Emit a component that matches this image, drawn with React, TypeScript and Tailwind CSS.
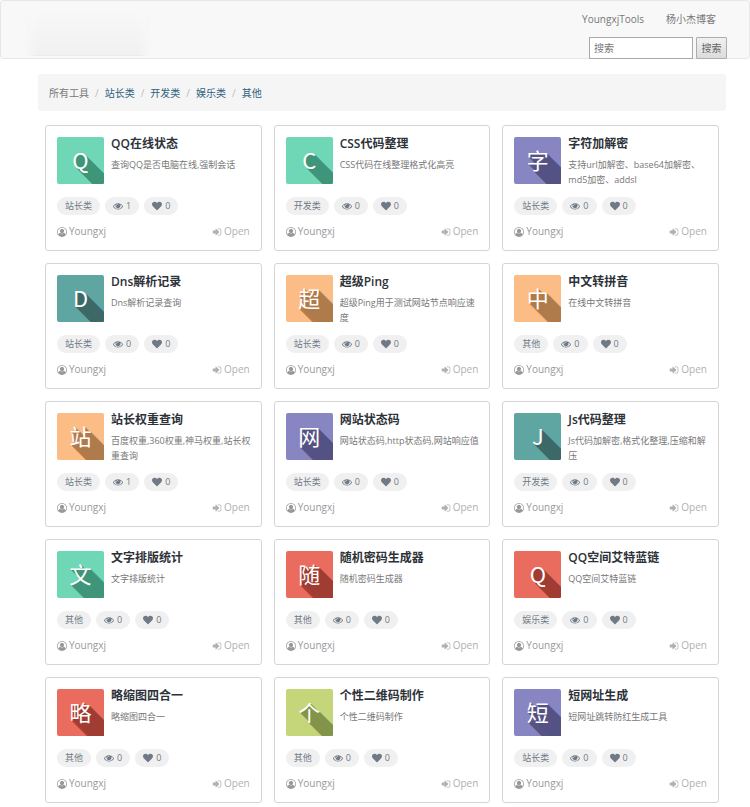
import React from "react";

type Tone = { tile: string; shade: string };

const tones: Record<string, Tone> = {
  mint: { tile: "bg-[#6fd7b6]", shade: "#3f9579" },
  violet: { tile: "bg-[#8886c2]", shade: "#545284" },
  teal: { tile: "bg-[#5fa5a2]", shade: "#3c6967" },
  peach: { tile: "bg-[#fbbc85]", shade: "#b07b4a" },
  coral: { tile: "bg-[#ea6c5e]", shade: "#a03c32" },
  lime: { tile: "bg-[#c4d57a]", shade: "#82934a" },
};

type Tool = {
  glyph: string;
  tone: string;
  title: string;
  desc: string;
  category: string;
  views: number;
};

const tools: Tool[] = [
  { glyph: "Q", tone: "mint", title: "QQ在线状态", desc: "查询QQ是否电脑在线,强制会话", category: "站长类", views: 1 },
  { glyph: "C", tone: "mint", title: "CSS代码整理", desc: "CSS代码在线整理格式化高亮", category: "开发类", views: 0 },
  { glyph: "字", tone: "violet", title: "字符加解密", desc: "支持url加解密、base64加解密、md5加密、addsl", category: "站长类", views: 0 },
  { glyph: "D", tone: "teal", title: "Dns解析记录", desc: "Dns解析记录查询", category: "站长类", views: 0 },
  { glyph: "超", tone: "peach", title: "超级Ping", desc: "超级Ping用于测试网站节点响应速度", category: "站长类", views: 0 },
  { glyph: "中", tone: "peach", title: "中文转拼音", desc: "在线中文转拼音", category: "其他", views: 0 },
  { glyph: "站", tone: "peach", title: "站长权重查询", desc: "百度权重,360权重,神马权重,站长权重查询", category: "站长类", views: 1 },
  { glyph: "网", tone: "violet", title: "网站状态码", desc: "网站状态码,http状态码,网站响应值", category: "站长类", views: 0 },
  { glyph: "J", tone: "teal", title: "Js代码整理", desc: "Js代码加解密,格式化整理,压缩和解压", category: "开发类", views: 0 },
  { glyph: "文", tone: "mint", title: "文字排版统计", desc: "文字排版统计", category: "其他", views: 0 },
  { glyph: "随", tone: "coral", title: "随机密码生成器", desc: "随机密码生成器", category: "其他", views: 0 },
  { glyph: "Q", tone: "coral", title: "QQ空间艾特蓝链", desc: "QQ空间艾特蓝链", category: "娱乐类", views: 0 },
  { glyph: "略", tone: "coral", title: "略缩图四合一", desc: "略缩图四合一", category: "其他", views: 0 },
  { glyph: "个", tone: "lime", title: "个性二维码制作", desc: "个性二维码制作", category: "其他", views: 0 },
  { glyph: "短", tone: "violet", title: "短网址生成", desc: "短网址跳转防红生成工具", category: "站长类", views: 0 },
];

const paths = {
  eye: "M1664 960q-152-236-381-353 61 104 61 225 0 185-131.5 316.5t-316.5 131.5-316.5-131.5-131.5-316.5q0-121 61-225-229 117-381 353 133 205 333.5 326.5t434.5 121.5 434.5-121.5 333.5-326.5zm-720-384q0-20-14-34t-34-14q-125 0-214.5 89.5t-89.5 214.5q0 20 14 34t34 14 34-14 14-34q0-86 61-147t147-61q20 0 34-14t14-34zm848 384q0 34-20 69-140 230-376.5 368.5t-499.5 138.5-499.5-139-376.5-368q-20-35-20-69t20-69q140-229 376.5-368t499.5-139 499.5 139 376.5 368q20 35 20 69z",
  heart: "M896 1664q-26 0-44-18l-624-602q-10-8-27.5-26t-55.5-65.5-68-97.5-53.5-121-23.5-138q0-220 127-344t351-124q62 0 126.5 21.5t120 58 95.5 68.5 76 68q36-36 76-68t95.5-68.5 120-58 126.5-21.5q224 0 351 124t127 344q0 221-229 450l-623 600q-18 18-44 18z",
  user: "M896 0q182 0 348 71t286 191 191 286 71 348q0 181-70.5 347t-190.5 286-286 191.5-349 71.5-349-71-285.5-191.5-190.5-286-71-347.5 71-348 191-286 286-191 348-71zm619 1351q149-205 149-455 0-156-61-298t-164-245-245-164-298-61-298 61-245 164-164 245-61 298q0 250 149 455 66-327 306-327 131 128 313 128t313-128q240 0 306 327zm-235-647q0-159-112.5-271.5t-271.5-112.5-271.5 112.5-112.5 271.5 112.5 271.5 271.5 112.5 271.5-112.5 112.5-271.5z",
  enter: "M1312 896q0 26-19 45l-544 544q-19 19-45 19t-45-19-19-45v-288h-448q-26 0-45-19t-19-45v-384q0-26 19-45t45-19h448v-288q0-26 19-45t45-19 45 19l544 544q19 19 19 45zm352-352v704q0 119-84.5 203.5t-203.5 84.5h-320q-13 0-22.5-9.5t-9.5-22.5q0-4-1-20t-.5-26.5 3-23.5 10-19.5 20.5-6.5h320q66 0 113-47t47-113v-704q0-66-47-113t-113-47h-312l-11.5-1-11.5-3-8-5.5-7-9-2-13.5q0-4-1-20t-.5-26.5 3-23.5 10-19.5 20.5-6.5h320q119 0 203.5 84.5t84.5 203.5z",
};

function Icon({ name, className }: { name: keyof typeof paths; className: string }) {
  return (
    <svg viewBox="0 0 1792 1792" fill="currentColor" aria-hidden="true" className={className}>
      <path d={paths[name]} />
    </svg>
  );
}

// Stacks one-pixel diagonal steps into a long flat shadow that the tile clips.
function longShadow(color: string) {
  return Array.from({ length: 40 }, (_, i) => `${i + 1}px ${i + 1}px 0 ${color}`).join(",");
}

function Pill({ children }: { children: React.ReactNode }) {
  return (
    <span className="flex h-[18px] items-center gap-[3px] rounded-full bg-[#f0f0f0] px-2 text-[9px] text-[#6f7a86]">
      {children}
    </span>
  );
}

function ToolCard({ tool }: { tool: Tool }) {
  const tone = tones[tool.tone];
  return (
    <article className="rounded-[3px] border border-[#d5d5d5] bg-white p-[11px]">
      <div className="-mr-1 flex h-[47px] gap-[7px]">
        <div
          className={`flex size-[47px] shrink-0 items-center justify-center overflow-hidden rounded-[2px] pb-[3px] font-['Noto_Sans_CJK_SC',sans-serif] text-[22px] leading-none text-white ${tone.tile}`}
          style={{ textShadow: longShadow(tone.shade) }}
        >
          {tool.glyph}
        </div>
        <div className="min-w-0 flex-1">
          <h2 className="text-[12px] leading-[14px] font-semibold text-[#2d3238]">{tool.title}</h2>
          <p className="mt-[6px] text-[9px] leading-[15px] text-[#777]">{tool.desc}</p>
        </div>
      </div>
      <div className="mt-[13px] flex gap-[5px]">
        <Pill>{tool.category}</Pill>
        <Pill>
          <Icon name="eye" className="size-[10px]" />
          {tool.views}
        </Pill>
        <Pill>
          <Icon name="heart" className="size-[10px]" />0
        </Pill>
      </div>
      <div className="mt-[9px] flex h-[15px] items-center justify-between text-[10px]">
        <span className="flex items-center gap-[2px] text-[#999]">
          <Icon name="user" className="size-[10px]" />
          Youngxj
        </span>
        <a href="#open" className="flex items-center gap-[2px] text-[#b0b0b0]">
          <Icon name="enter" className="size-[10px]" />
          Open
        </a>
      </div>
    </article>
  );
}

const categories = ["站长类", "开发类", "娱乐类", "其他"];

export default function App() {
  return (
    <div className="min-h-screen bg-white pb-1 font-['Open_Sans','Noto_Sans_CJK_SC',sans-serif]" lang="zh-CN">
      <header className="flex items-start justify-between rounded-[3px] border border-[#e7e7e7] bg-[#f8f8f8] pr-[22px] pl-6">
        <div className="mt-2 h-[47px] w-[126px] border-b border-[#ebebeb] bg-linear-to-b from-[#f8f8f8] to-[#f1f1f1] mask-x-from-90%" />
        <div className="flex flex-col items-end">
          <nav className="mt-[10px] flex gap-[22px] pr-[11px] text-[10px] leading-[16px] text-[#777]">
            <a href="#tools">YoungxjTools</a>
            <a href="#blog">杨小杰博客</a>
          </nav>
          <form className="mt-[10px] -mb-px flex gap-[3px] text-[10px]" onSubmit={(e) => e.preventDefault()}>
            <input
              type="text"
              aria-label="搜索"
              placeholder="搜索"
              className="h-[22px] w-[104px] border border-[#a9a9a9] bg-white px-1 text-[#555] placeholder:text-[#777]"
            />
            <button
              type="submit"
              className="h-[22px] w-[31px] rounded-[1px] border border-[#adadad] bg-linear-to-b from-[#f1f1f1] to-[#dcdcdc] text-[#666]"
            >
              搜索
            </button>
          </form>
        </div>
      </header>

      <main className="mt-[15px] pr-6 pl-[38px]">
        <nav aria-label="分类" className="h-[37px] rounded-[3px] bg-[#f5f5f5] px-[11px] pt-px">
          <ol className="flex h-full items-center text-[10px]">
            <li className="text-[#777]">所有工具</li>
            {categories.map((name) => (
              <li key={name} className="flex">
                <span className="px-[6px] text-[#bbb]">/</span>
                <a href={`#${name}`} className="text-[#2f5f80]">
                  {name}
                </a>
              </li>
            ))}
          </ol>
        </nav>

        <section className="mt-[14px] grid grid-cols-3 gap-3 px-[7px]">
          {tools.map((tool) => (
            <ToolCard key={tool.title} tool={tool} />
          ))}
        </section>
      </main>
    </div>
  );
}
